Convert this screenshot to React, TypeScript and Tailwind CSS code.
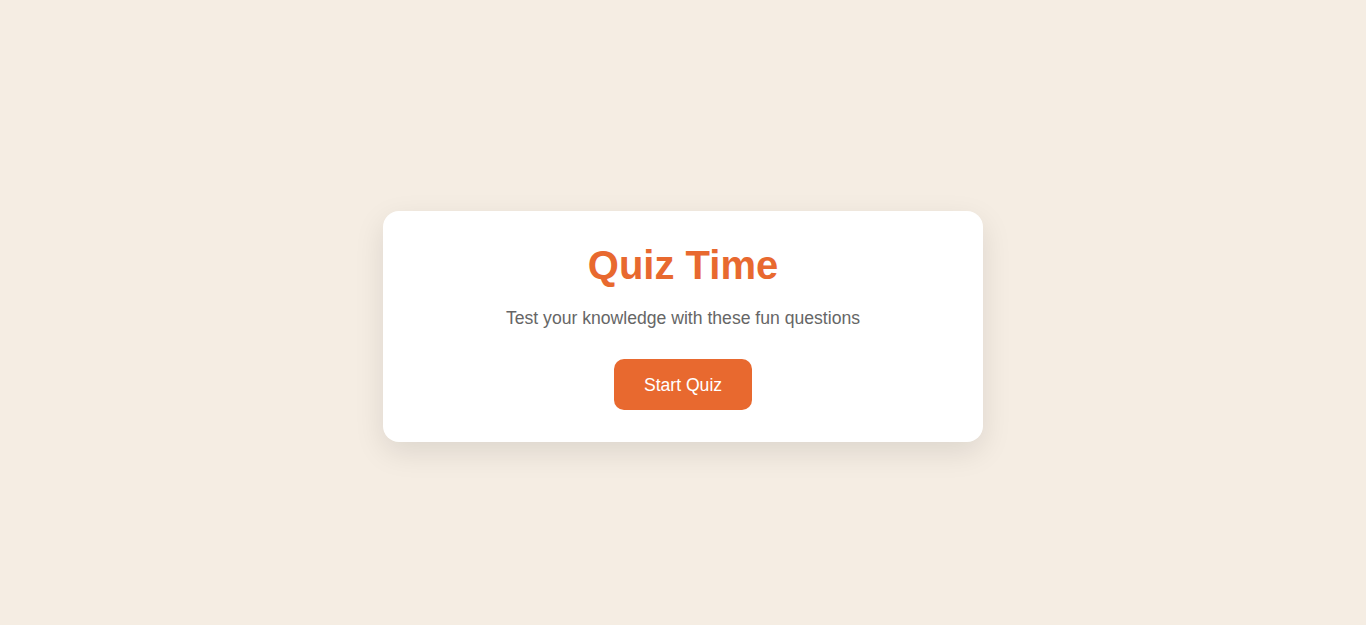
import React from 'react';

export default function App() {
  return (
    <div className="min-h-screen w-full bg-[#f5ede3] pt-[28px] flex items-center justify-center font-['Liberation_Sans',Arial,sans-serif]">
      {/* Start card */}
      <div className="w-[600px] bg-white rounded-2xl px-8 pt-[30px] pb-8 text-center shadow-[0_10px_30px_rgba(0,0,0,0.1)]">
        <h1 className="text-[40px] leading-[1.2] font-bold text-[#e8692f]">Quiz Time</h1>
        <p className="mt-4 text-[17.6px] leading-[1.5] text-[#666]">Test your knowledge with these fun questions</p>
        <button className="mt-[28px] bg-[#e8692f] text-white text-[17.6px] leading-[1.5] px-[30px] py-[12.5px] rounded-[10px]">
          Start Quiz
        </button>
      </div>
    </div>
  );
}
